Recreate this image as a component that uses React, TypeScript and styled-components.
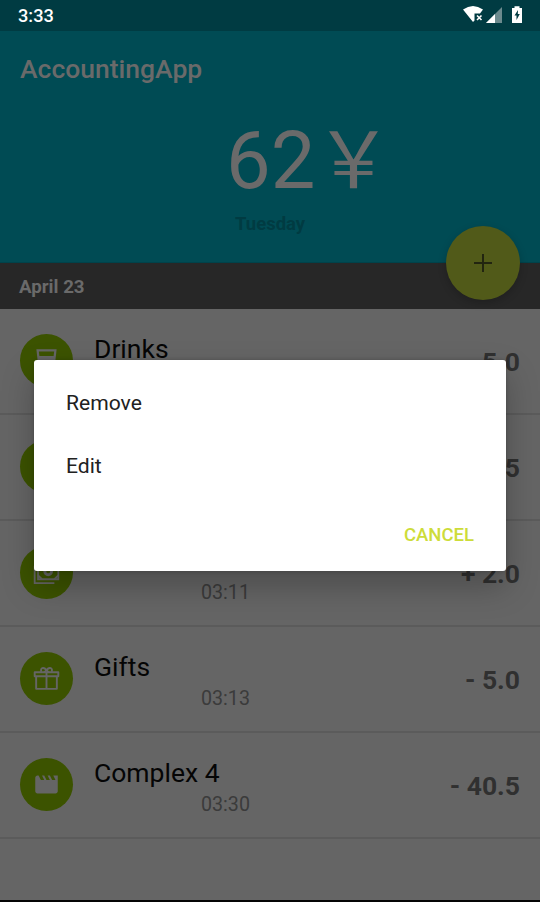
import React from "react";
import styled, { createGlobalStyle } from "styled-components";

const GlobalStyle = createGlobalStyle`
  * { box-sizing: border-box; }
  html, body { margin: 0; padding: 0; background: #000; }
  body { font-family: Roboto, sans-serif; overflow: hidden; }
`;

const Screen = styled.div`
  position: relative;
  width: 540px;
  height: 902px;
  display: flex;
  flex-direction: column;
  background: #656565;
  border-bottom: 2px solid #050505;
  overflow: hidden;
  white-space: nowrap;
`;

const StatusBar = styled.div`
  height: 31px;
  flex: none;
  background: #003b42;
  display: flex;
  justify-content: space-between;
  padding: 0 18px 0 18px;
`;

const Clock = styled.div`
  color: #fff;
  font-size: 18.2px;
  font-weight: 500;
  line-height: 32px;
`;

const StatusIcons = styled.svg`
  width: 62px;
  height: 31px;
  display: block;
`;

const Header = styled.header`
  height: 232px;
  flex: none;
  background: #004b54;
  display: flex;
  flex-direction: column;
  box-shadow: inset 0 -1px 0 #00424a;
`;

const AppTitle = styled.h1`
  margin: 22px 0 0 20px;
  font-size: 26.5px;
  font-weight: 500;
  line-height: 32px;
  color: #6a6a6a;
`;

const Balance = styled.div`
  margin: 32px 0 0 226px;
  display: flex;
  height: 88px;
  font-size: 79.5px;
  line-height: 88px;
  color: #6a6a6a;
`;

const Currency = styled.span`
  margin: -7px 0 0 -1px;
  font-family: "Noto Sans CJK SC", sans-serif;
  font-size: 78px;
`;

const Weekday = styled.div`
  margin: 8px 0 0 235px;
  font-size: 18.5px;
  font-weight: 700;
  line-height: 22px;
  color: #003b42;
`;

const DateBar = styled.div`
  height: 46px;
  flex: none;
  padding-left: 19px;
  background: #272727;
  color: #6a6a6a;
  font-size: 18.7px;
  font-weight: 700;
  line-height: 48px;
`;

const Fab = styled.button`
  position: absolute;
  left: 446px;
  top: 226px;
  width: 74px;
  height: 74px;
  padding: 0;
  border: 0;
  border-radius: 50%;
  background: #515a19;
  box-shadow: 0 3px 8px rgba(0, 0, 0, 0.2);
  display: grid;
  place-items: center;
`;

const List = styled.ul`
  margin: 0;
  padding: 0;
  list-style: none;
`;

const Row = styled.li`
  height: 106px;
  padding: 25px 20px 0;
  border-bottom: 2px solid #5b5b5b;
  display: grid;
  grid-template-columns: 74px 156px 1fr;
`;

const Badge = styled.div`
  width: 53px;
  height: 53px;
  border-radius: 50%;
  background: #3c5300;
  display: grid;
  place-items: center;
`;

const Glyph = styled.svg`
  width: 27px;
  height: 27px;
  display: block;
  color: #656565;
`;

const Details = styled.div`
  display: flex;
  flex-direction: column;
`;

const Name = styled.div`
  height: 30px;
  font-size: 26.5px;
  line-height: 30px;
  color: #050505;
`;

const Time = styled.div`
  align-self: flex-end;
  font-size: 19.7px;
  line-height: 33px;
  color: #3b3b3b;
`;

const Amount = styled.div`
  text-align: right;
  font-size: 26.5px;
  font-weight: 700;
  line-height: 55px;
  color: #303030;
`;

const Dialog = styled.div`
  position: absolute;
  left: 34px;
  top: 360px;
  width: 472px;
  height: 211px;
  padding: 11px 0 0;
  border-radius: 3px;
  background: #fff;
  box-shadow: 0 15px 32px rgba(0, 0, 0, 0.25), 0 0 4px rgba(0, 0, 0, 0.2);
  display: flex;
  flex-direction: column;
`;

const Option = styled.div`
  height: 63px;
  padding-left: 32px;
  font-size: 21.1px;
  line-height: 63px;
  color: #212121;
`;

const Cancel = styled.div`
  align-self: flex-end;
  margin-right: 32px;
  font-size: 18.5px;
  font-weight: 500;
  line-height: 76px;
  color: #cddc39;
`;

const icons: Record<string, React.ReactNode> = {
  drink: <path fill="currentColor" fillRule="evenodd" d="M3 2l2 18.200c.1 1 1 1.800 2 1.800h10c1 0 1.900-.8 2-1.800L21 2H3zm15.300 6H5.700l-.5-4h13.600l-.5 4z" />,
  cash: (
    <g fill="none" stroke="currentColor" strokeWidth="1.600">
      <path d="M1.500 6v15.500h17.500" />
      <path d="M4.500 4v14h18V4z" />
      <circle cx="13.500" cy="11" r="3" strokeWidth="2.600" />
      <path d="M4.500 14.500l3.500 3.500M22.500 14.500L19 18" />
    </g>
  ),
  gift: (
    <g fill="none" stroke="currentColor" strokeWidth="1.700" strokeLinejoin="round">
      <path d="M1.500 6.500h21v3.500h-21zM2.800 10v11.200h18.400V10M12 6.500v14.700" />
      <path d="M7.500 6.200C6 2.500 9.500 1.500 12 4.600 14.500 1.500 18 2.500 16.500 6.200M12 4.500L9.800 6.800M12 4.500l2.200 2.300" />
    </g>
  ),
  movie: <path fill="currentColor" d="M18 4l2 4h-3l-2-4h-2l2 4h-3l-2-4H8l2 4H7L5 4H4c-1.100 0-2 .9-2 2v12c0 1.100.9 2 2 2h16c1.100 0 2-.9 2-2V4z" />,
};

type Entry = { icon: string; name?: string; time?: string; amount: string };

const entries: Entry[] = [
  { icon: "drink", name: "Drinks", amount: "- 5.0" },
  { icon: "drink", amount: "5" },
  { icon: "cash", time: "03:11", amount: "+ 2.0" },
  { icon: "gift", name: "Gifts", time: "03:13", amount: "- 5.0" },
  { icon: "movie", name: "Complex 4", time: "03:30", amount: "- 40.5" },
];

export default function App() {
  return (
    <>
      <GlobalStyle />
      <Screen>
        <StatusBar>
          <Clock>3:33</Clock>
          <StatusIcons viewBox="0 0 62 31">
            <path fill="#fff" d="M3 9.500Q13 2.500 23 9.500L20 13.500H14.500V20.500L13 22z" />
            <path stroke="#fff" strokeWidth="1.600" d="M17 15.500l4.500 4.500M21.500 15.500L17 20" />
            <path fill="#6c8a8e" d="M42 7v16H26z" />
            <path fill="#fff" d="M35 14v9h-9z" />
            <path fill="#fff" d="M52 8h2.500V6.300h5V8H62v15H52z" />
            <path fill="#003b42" d="M58 10l-3.500 5.500h2V20l3.300-6h-2z" />
          </StatusIcons>
        </StatusBar>
        <Header>
          <AppTitle>AccountingApp</AppTitle>
          <Balance>
            <span>62</span>
            <Currency>￥</Currency>
          </Balance>
          <Weekday>Tuesday</Weekday>
        </Header>
        <DateBar>April 23</DateBar>
        <List>
          {entries.map((e, i) => (
            <Row key={i}>
              <Badge>
                <Glyph viewBox="0 0 24 24">{icons[e.icon]}</Glyph>
              </Badge>
              <Details>
                <Name>{e.name}</Name>
                <Time>{e.time}</Time>
              </Details>
              <Amount>{e.amount}</Amount>
            </Row>
          ))}
        </List>
        <Fab aria-label="Add">
          <svg width="20" height="20" viewBox="0 0 20 20">
            <path d="M10 1v18M1 10h18" stroke="#222510" strokeWidth="2" />
          </svg>
        </Fab>
        <Dialog role="dialog">
          <Option>Remove</Option>
          <Option>Edit</Option>
          <Cancel>CANCEL</Cancel>
        </Dialog>
      </Screen>
    </>
  );
}
